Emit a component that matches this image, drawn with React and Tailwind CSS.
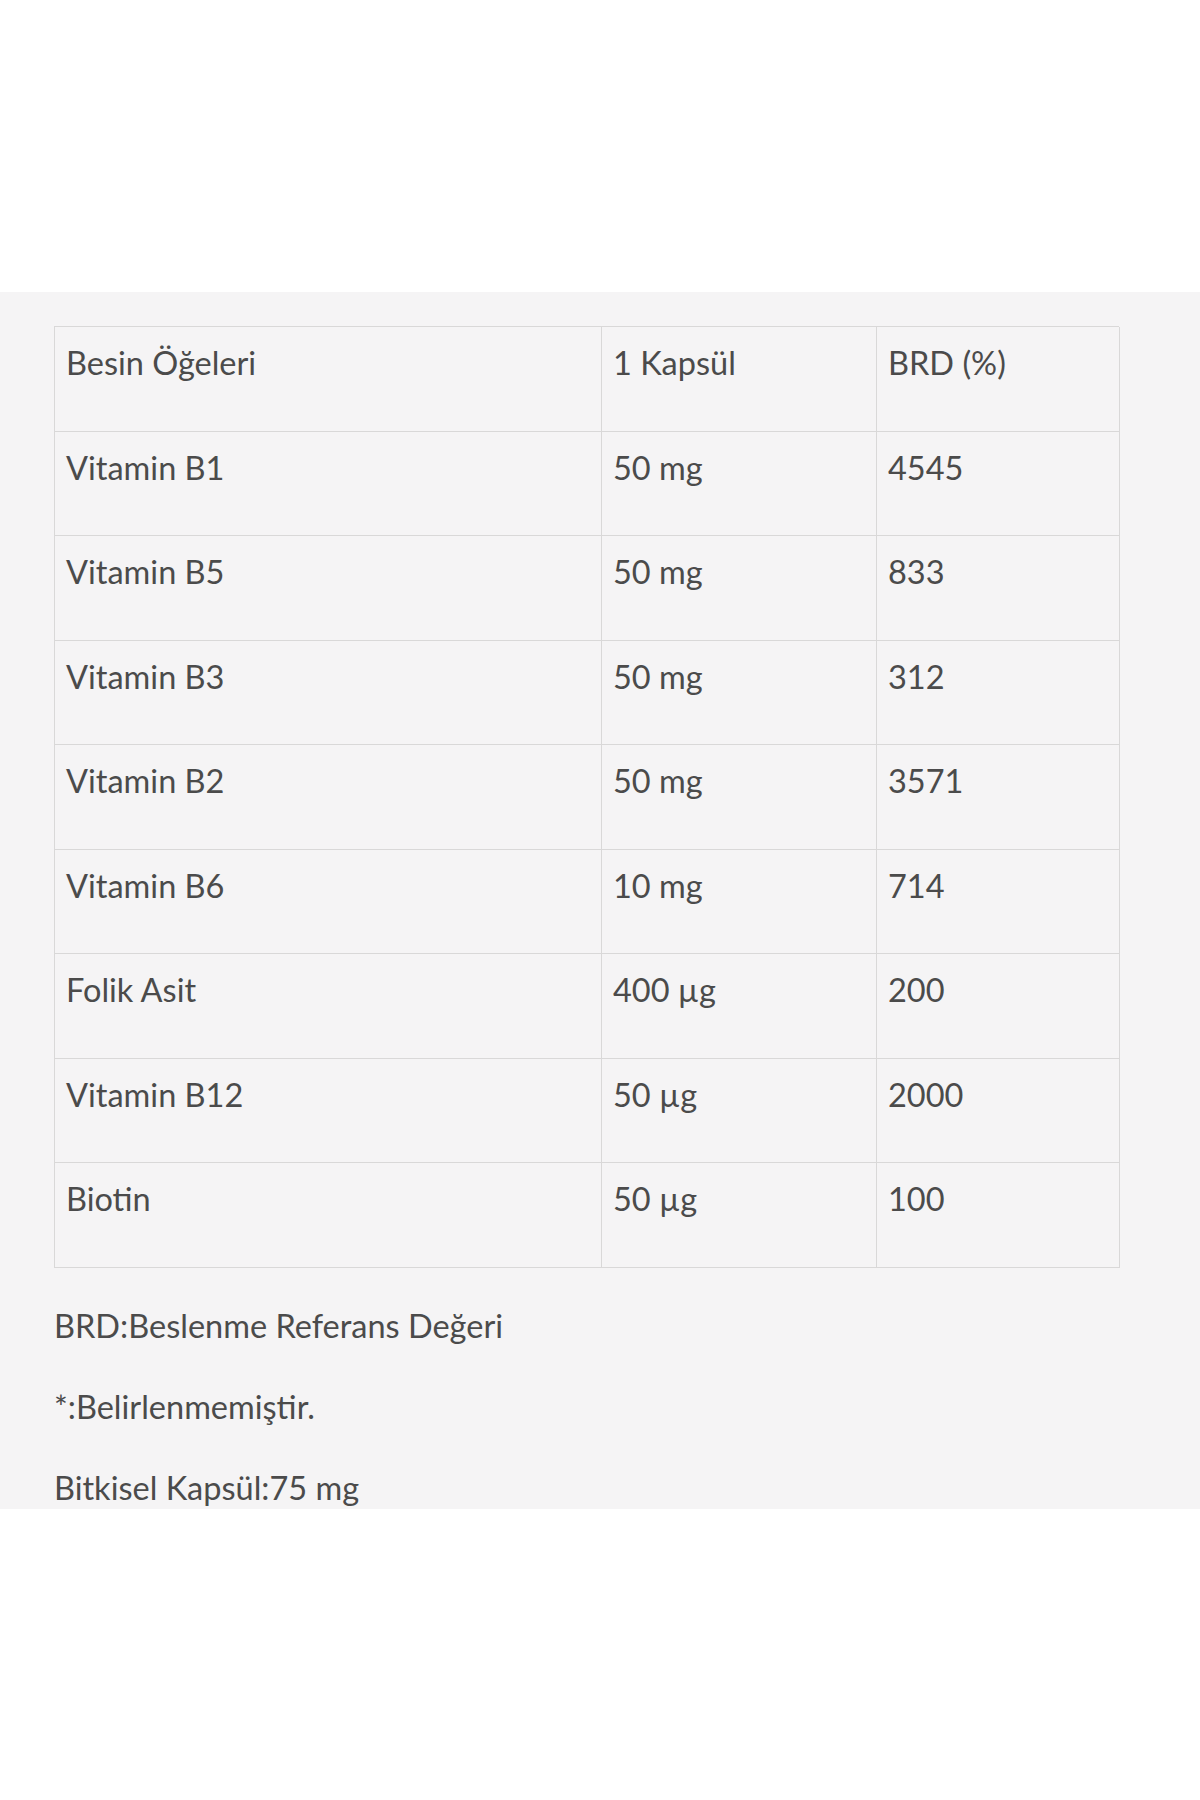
const ROWS = [
  ["Besin Öğeleri", "1 Kapsül", "BRD (%)"],
  ["Vitamin B1", "50 mg", "4545"],
  ["Vitamin B5", "50 mg", "833"],
  ["Vitamin B3", "50 mg", "312"],
  ["Vitamin B2", "50 mg", "3571"],
  ["Vitamin B6", "10 mg", "714"],
  ["Folik Asit", "400 µg", "200"],
  ["Vitamin B12", "50 µg", "2000"],
  ["Biotin", "50 µg", "100"],
];

const NOTES = [
  "BRD:Beslenme Referans Değeri",
  "*:Belirlenmemiştir.",
  "Bitkisel Kapsül:75 mg",
];

export default function App() {
  return (
    <div className="min-h-[1800px] bg-white font-['Lato',sans-serif] text-[32.5px] leading-[36px] text-[#4b4b4b]">
      <div className="h-[292px]" />

      <div className="bg-[#f5f4f5] pl-[54px] pt-[34px] pb-[3px]">
        {/* nutrition table */}
        <div className="w-[1065px] border-l border-t border-[#d9d8d8]">
          {ROWS.map((row, i) => (
            <div
              key={i}
              className="grid h-[104.5px] grid-cols-[547px_275px_243px]"
            >
              {row.map((cell, j) => (
                <div
                  key={j}
                  className="border-r border-b border-[#d9d8d8] pl-[11px] pt-[18px]"
                >
                  {cell}
                </div>
              ))}
            </div>
          ))}
        </div>

        <div className="mt-[40px] flex flex-col gap-[45px]">
          {NOTES.map((note) => (
            <p key={note}>{note}</p>
          ))}
        </div>
      </div>
    </div>
  );
}
